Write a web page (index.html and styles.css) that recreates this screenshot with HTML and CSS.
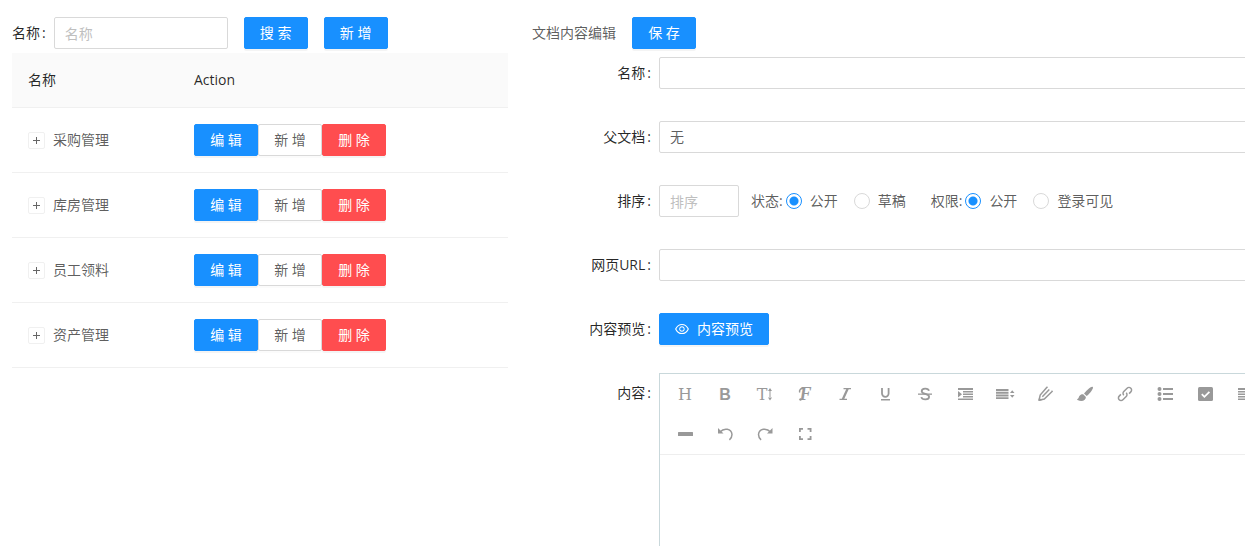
FILE: index.html
```html
<!DOCTYPE html>
<html lang="zh-CN">
<head>
<meta charset="utf-8">
<title>文档管理</title>
<link rel="stylesheet" href="styles.css">
</head>
<body>
<main class="page">
  <section class="list">
    <form class="search">
      <label class="search-label" for="keyword">名称<span class="colon">:</span></label>
      <input class="input search-input" id="keyword" type="text" placeholder="名称">
      <button class="btn btn-primary" type="button">搜 索</button>
      <button class="btn btn-primary" type="button">新 增</button>
    </form>
    <table class="table">
      <thead>
        <tr><th class="col-name">名称</th><th class="col-action">Action</th></tr>
      </thead>
      <tbody>
        <tr>
          <td><div class="name"><button class="expand" type="button" aria-label="展开"></button>采购管理</div></td>
          <td><div class="actions"><button class="btn btn-primary" type="button">编 辑</button><button class="btn" type="button">新 增</button><button class="btn btn-danger" type="button">删 除</button></div></td>
        </tr>
        <tr>
          <td><div class="name"><button class="expand" type="button" aria-label="展开"></button>库房管理</div></td>
          <td><div class="actions"><button class="btn btn-primary" type="button">编 辑</button><button class="btn" type="button">新 增</button><button class="btn btn-danger" type="button">删 除</button></div></td>
        </tr>
        <tr>
          <td><div class="name"><button class="expand" type="button" aria-label="展开"></button>员工领料</div></td>
          <td><div class="actions"><button class="btn btn-primary" type="button">编 辑</button><button class="btn" type="button">新 增</button><button class="btn btn-danger" type="button">删 除</button></div></td>
        </tr>
        <tr>
          <td><div class="name"><button class="expand" type="button" aria-label="展开"></button>资产管理</div></td>
          <td><div class="actions"><button class="btn btn-primary" type="button">编 辑</button><button class="btn" type="button">新 增</button><button class="btn btn-danger" type="button">删 除</button></div></td>
        </tr>
      </tbody>
    </table>
  </section>

  <section class="detail">
    <header class="detail-head">
      <span>文档内容编辑</span>
      <button class="btn btn-primary" type="button">保 存</button>
    </header>
    <form class="form">
      <div class="field">
        <label class="field-label" for="name">名称<span class="colon">:</span></label>
        <div class="control"><input class="input" id="name" type="text"></div>
      </div>
      <div class="field">
        <label class="field-label" for="parent">父文档<span class="colon">:</span></label>
        <div class="control"><select class="input" id="parent"><option>无</option></select></div>
      </div>
      <div class="field">
        <label class="field-label" for="order">排序<span class="colon">:</span></label>
        <div class="control">
          <input class="input input-order" id="order" type="text" placeholder="排序">
          <div class="radios" role="radiogroup" aria-labelledby="state">
            <span id="state">状态:</span>
            <label class="radio"><input type="radio" name="state" checked>公开</label>
            <label class="radio"><input type="radio" name="state">草稿</label>
          </div>
          <div class="radios" role="radiogroup" aria-labelledby="access">
            <span id="access">权限:</span>
            <label class="radio"><input type="radio" name="access" checked>公开</label>
            <label class="radio"><input type="radio" name="access">登录可见</label>
          </div>
        </div>
      </div>
      <div class="field">
        <label class="field-label" for="url">网页URL<span class="colon">:</span></label>
        <div class="control"><input class="input" id="url" type="text"></div>
      </div>
      <div class="field">
        <label class="field-label" for="preview">内容预览<span class="colon">:</span></label>
        <div class="control">
          <button class="btn btn-primary" id="preview" type="button">
            <svg class="eye" viewBox="64 64 896 896" aria-hidden="true"><path d="M942.2 486.2C847.4 286.5 704.1 186 512 186c-192.2 0-335.4 100.5-430.2 300.3a60.3 60.3 0 0 0 0 51.5C176.6 737.5 319.9 838 512 838c192.2 0 335.4-100.5 430.2-300.3 7.7-16.2 7.7-35 0-51.5zM512 766c-161.3 0-279.4-81.8-362.7-254C232.6 339.8 350.7 258 512 258c161.3 0 279.4 81.8 362.7 254C791.5 684.2 673.4 766 512 766zm-4-430c-97.2 0-176 78.8-176 176s78.8 176 176 176 176-78.8 176-176-78.8-176-176-176zm0 288c-61.9 0-112-50.1-112-112s50.1-112 112-112 112 50.1 112 112-50.1 112-112 112z"/></svg>内容预览</button>
        </div>
      </div>
      <div class="field">
        <label class="field-label" for="content">内容<span class="colon">:</span></label>
        <div class="editor">
          <div class="toolbar">
            <div class="tools">
              <button class="tool" type="button" aria-label="标题"><svg viewBox="0 0 20 20"><text class="serif" x="10" y="16">H</text></svg></button>
              <button class="tool" type="button" aria-label="加粗"><svg viewBox="0 0 20 20"><text class="sans" x="10" y="16">B</text></svg></button>
              <button class="tool" type="button" aria-label="字号"><svg viewBox="0 0 20 20"><text class="serif" x="7" y="16">T</text><path d="M14.500 6h1v8h-1zM13 7l2-3 2 3zM13 13.500l2 3 2-3z"/></svg></button>
              <button class="tool" type="button" aria-label="字体"><svg viewBox="0 0 20 20"><text class="script" x="10.500" y="16">F</text><path class="line mid" d="M8.500 4.700C5.500 4 4 6 4.700 8.500"/><circle cx="5.500" cy="15.500" r="1.200"/></svg></button>
              <button class="tool" type="button" aria-label="斜体"><svg viewBox="0 0 20 20"><path d="M8.500 4H16v1.200h-2.300L9.300 14.800H12V16H4.500v-1.200h2.300l4.400-9.600H8.500z"/></svg></button>
              <button class="tool" type="button" aria-label="下划线"><svg viewBox="0 0 20 20"><path class="line thick" d="M7 4v5.500a3.300 3.300 0 0 0 6.600 0V4"/><path d="M6 15h9v1.500H6z"/></svg></button>
              <button class="tool" type="button" aria-label="删除线"><svg viewBox="0 0 20 20"><path class="line thick" d="M14 6.800C13.300 3.800 6.700 3.800 6.700 7.200c0 3.300 7.400 2.200 7.400 5.600 0 3.500-7 3.500-7.800.3"/><path d="M3 9.500h14v1.300H3z"/></svg></button>
              <button class="tool" type="button" aria-label="缩进"><svg viewBox="0 0 20 20"><path d="M3 4h15v2H3zM8 7h10v1.500H8zM8 9.500h10V11H8zM8 12h10v1.500H8zM3 14.500h15v1.500H3zM3 7l4 3.200-4 3.300z"/></svg></button>
              <button class="tool" type="button" aria-label="行高"><svg viewBox="0 0 20 20"><path d="M1 5h12.500v2.200H1zM1 8h12.500v1.800H1zM1 10.600h12.500v1.800H1zM1 13.200h12.500V15H1zM15 9l2.200-2.800L19.500 9zM15 11l2.200 2.800 2.300-2.800z"/></svg></button>
              <button class="tool" type="button" aria-label="文字颜色"><svg viewBox="0 0 20 20"><path class="line mid" d="M4 16.300 5.200 11 11.500 3.800M4 16.300 9.300 15 16.800 7.800M7.300 12.700l7-7.200M11.500 3.800l1-1M16.800 7.800l.7-1"/><path d="M3.300 17l.8-3.500 2.700 2.700z"/></svg></button>
              <button class="tool" type="button" aria-label="背景颜色"><svg viewBox="0 0 20 20"><path d="M17.800 3c-.8-.8-2.200.1-3.600 1.300-1.700 1.500-3.800 3.500-5.200 5.200l2.600 2.600c2-1.600 3.700-3.600 5-5.400C17.600 5.200 18.500 3.700 17.800 3zM8.200 10.200 10.900 12.900C11 15.800 7.500 18.300 2.500 16c-.5-.4-.4-1 0-1 1.200-.2 1-1.500 1.700-2.700.8-1.600 2.400-2.200 4-2.100z"/></svg></button>
              <button class="tool" type="button" aria-label="链接"><svg viewBox="0 0 20 20"><path class="line mid" d="M8.800 11.200a2.600 2.600 0 0 1 0-3.700l3.300-3.300a2.600 2.600 0 0 1 3.700 3.700l-1.700 1.700M11.200 8.800a2.600 2.600 0 0 1 0 3.700l-3.300 3.300a2.600 2.600 0 0 1-3.700-3.700l1.700-1.700"/></svg></button>
              <button class="tool" type="button" aria-label="列表"><svg viewBox="0 0 20 20"><path d="M8 4h10v2H8zM8 9h10v2H8zM8 14h10v2H8z"/><circle cx="4.500" cy="5" r="2"/><circle cx="4.500" cy="10" r="2"/><circle cx="4.500" cy="15" r="2"/></svg></button>
              <button class="tool" type="button" aria-label="待办"><svg viewBox="0 0 20 20"><rect x="3" y="3" width="15" height="14" rx="1.500"/><path class="tick" d="m6.800 10.200 2.600 2.600 5-5"/></svg></button>
              <button class="tool" type="button" aria-label="对齐"><svg viewBox="0 0 20 20"><path d="M3 4h15v2H3zM3 7h15v1.500H3zM3 9.500h15V11H3zM3 12h15v1.500H3zM3 14.500h15v1.500H3z"/></svg></button>
            </div>
            <div class="tools">
              <button class="tool" type="button" aria-label="分割线"><svg viewBox="0 0 20 20"><rect x="3" y="8" width="15" height="4" rx=".5"/></svg></button>
              <button class="tool" type="button" aria-label="撤销"><svg viewBox="0 0 20 20"><path class="line mid" d="M5 8C9 3.500 16.500 4.500 17 10.500c0 2.200-.9 3.900-2.600 5.300"/><path d="M3 4v5.500h5.500z"/></svg></button>
              <button class="tool" type="button" aria-label="重做"><svg viewBox="0 0 20 20"><path class="line mid" d="M15.500 8C11.500 3.500 4 4.500 3.500 10.500c0 2.200.9 3.900 2.600 5.300"/><path d="M17.500 4v5.500H12z"/></svg></button>
              <button class="tool" type="button" aria-label="全屏"><svg viewBox="0 0 20 20"><path d="M4 4h4v1.700H5.800V8H4zM12.500 4h4v4h-1.800V5.700h-2.200zM4 12h1.800v2.300H8V16H4zM14.700 12h1.800v4h-4v-1.700h2.200z"/></svg></button>
            </div>
          </div>
          <textarea class="editor-text" id="content"></textarea>
        </div>
      </div>
    </form>
  </section>
</main>
</body>
</html>
```
FILE: styles.css
```css
* { box-sizing: border-box; }

body {
  margin: 0;
  height: 100vh;
  overflow: hidden;
  background: #fff;
  color: rgba(0, 0, 0, 0.65);
  font: 14px/22px "Open Sans", "Noto Sans CJK SC", sans-serif;
}

button, input, select, textarea { font: inherit; color: inherit; }

.page {
  display: grid;
  grid-template-columns: 1fr 2fr;
  min-width: 1560px;
  padding-top: 13px;
}

.list, .detail { padding: 0 12px; min-width: 0; }

.search, .detail-head {
  display: flex;
  align-items: center;
  gap: 16px;
  height: 40px;
}

.search-label, .field-label { color: rgba(0, 0, 0, 0.85); white-space: nowrap; }
.search-label { margin-right: -16px; }
.colon { margin: 0 8px 0 2px; }

.input {
  width: 100%;
  height: 32px;
  padding: 4px 10px;
  border: 1px solid #d9d9d9;
  border-radius: 2px;
  background: #fff;
  outline: none;
  appearance: none;
}
.input::placeholder { color: #bfbfbf; }
.search-input { width: 174px; }
.input-order { width: 80px; }

.btn {
  display: inline-flex;
  align-items: center;
  justify-content: center;
  gap: 8px;
  min-width: 64px;
  height: 32px;
  padding: 0 15px;
  border: 1px solid #d9d9d9;
  border-radius: 2px;
  background: #fff;
  box-shadow: 0 2px 0 rgba(0, 0, 0, 0.015);
  white-space: nowrap;
}
.btn-primary, .btn-danger {
  color: #fff;
  box-shadow: 0 2px 0 rgba(0, 0, 0, 0.045);
}
.btn-primary { background: #1890ff; border-color: #1890ff; }
.btn-danger { background: #ff4d4f; border-color: #ff4d4f; }
.eye { width: 14px; height: 14px; fill: currentColor; }

.table { width: 100%; border-collapse: separate; border-spacing: 0; table-layout: fixed; }
.table th, .table td {
  padding: 16px;
  border-bottom: 1px solid #f0f0f0;
  text-align: left;
}
.table th { background: #fafafa; color: rgba(0, 0, 0, 0.85); font-weight: 400; }
.table .col-name { width: 166px; }
.table .col-action { font-weight: 500; }

.name { display: flex; align-items: center; gap: 8px; }
.actions { display: flex; }

.expand {
  width: 17px;
  height: 17px;
  padding: 0;
  border: 1px solid #f0f0f0;
  border-radius: 2px;
  background:
    linear-gradient(#666, #666) center / 7px 1px no-repeat,
    linear-gradient(#666, #666) center / 1px 7px no-repeat,
    #fff;
}

.field {
  display: grid;
  grid-template-columns: 1fr 7fr;
  margin-bottom: 24px;
}
.field-label { text-align: right; line-height: 40px; }
.control { display: flex; align-items: center; height: 40px; min-width: 0; }

.radios { display: flex; align-items: center; margin-left: 12px; gap: 3px; }
.radio { display: flex; align-items: center; gap: 8px; margin-right: 13px; }
.radio input {
  width: 16px;
  height: 16px;
  margin: 0;
  border: 1px solid #d9d9d9;
  border-radius: 50%;
  appearance: none;
}
.radio input:checked {
  border-color: #1890ff;
  background: radial-gradient(circle, #1890ff 4px, #fff 5px);
}

.editor { min-width: 0; border: 1px solid #c9d8db; }
.toolbar { padding: 0 5px; border-bottom: 1px solid #eee; }
.tools { display: flex; }
.tool {
  display: flex;
  align-items: center;
  justify-content: center;
  width: 40px;
  height: 40px;
  padding: 0;
  border: 0;
  background: none;
}
.tool svg { width: 20px; height: 20px; fill: #999; }
.tool text { text-anchor: middle; font-size: 16px; }
.tool .serif { font-family: "DejaVu Serif", serif; }
.tool .sans { font-family: "Liberation Sans", sans-serif; font-weight: 700; }
.tool .script { font-family: "Liberation Serif", serif; font-size: 18px; font-style: italic; font-weight: 700; }
.tool .line { fill: none; stroke: #999; stroke-width: 1.2; }
.tool .mid { stroke-width: 1.5; }
.tool .thick { stroke-width: 1.8; }
.tool .tick { fill: none; stroke: #fff; stroke-width: 1.8; }

.editor-text {
  display: block;
  width: 100%;
  height: 300px;
  padding: 10px;
  border: 0;
  outline: none;
  resize: none;
}
```
